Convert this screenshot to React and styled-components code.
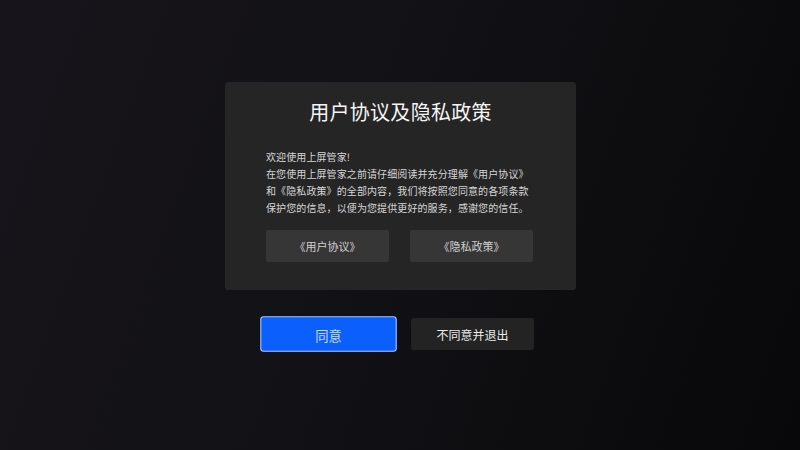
import React from 'react';
import styled, { createGlobalStyle } from 'styled-components';

const GlobalStyle = createGlobalStyle`
  html, body {
    margin: 0;
    padding: 0;
    background: #0c0b0e;
  }
  * {
    box-sizing: border-box;
  }
`;

const Page = styled.div`
  width: 800px;
  height: 450px;
  overflow: hidden;
  display: flex;
  flex-direction: column;
  align-items: center;
  padding-top: 82px;
  background: linear-gradient(110deg, #17151b 0%, #121115 45%, #08080a 100%);
  font-family: "Noto Sans CJK SC", "Noto Sans", sans-serif;
`;

const Card = styled.div`
  width: 351px;
  height: 208px;
  margin-left: 1px;
  padding: 15px 41px 0 41px;
  background: #252525;
  border-radius: 3px;
  display: flex;
  flex-direction: column;
`;

const Title = styled.h1`
  margin: 0;
  font-size: 20px;
  line-height: 30px;
  font-weight: 400;
  color: #f4f4f4;
  text-align: center;
  letter-spacing: 0.3px;
`;

const Body = styled.div`
  margin-top: 21px;
  font-size: 10px;
  line-height: 17px;
  color: #d6d6d6;
  letter-spacing: 0.1px;
`;

const Line = styled.p`
  margin: 0;
  white-space: nowrap;
`;

const LinkRow = styled.div`
  margin-top: 14px;
  display: flex;
  gap: 21px;
`;

const LinkButton = styled.button`
  width: 123px;
  height: 32px;
  border: none;
  border-radius: 2px;
  background: #363636;
  color: #cfcfcf;
  font-family: inherit;
  font-size: 11px;
  padding: 0;
`;

const ActionRow = styled.div`
  margin-top: 28px;
  margin-left: 1px;
  display: flex;
  gap: 21px;
`;

const ActionButton = styled.button`
  width: 123px;
  height: 32px;
  padding: 0;
  border-radius: 3px;
  font-family: inherit;
  font-size: 12px;
  border: ${(p) => (p.$focused ? '1px solid #a9c4ff' : 'none')};
  background: ${(p) => (p.$focused ? '#0b5ffd' : '#232323')};
  color: ${(p) => (p.$focused ? '#c9d9ff' : '#ececec')};
  transform: ${(p) => (p.$focused ? 'scale(1.11)' : 'none')};
`;

const App = () => {
  return (
    <>
      <GlobalStyle />
      <Page>
        <Card>
          <Title>用户协议及隐私政策</Title>
          <Body>
            <Line>欢迎使用上屏管家!</Line>
            <Line>在您使用上屏管家之前请仔细阅读并充分理解《用户协议》</Line>
            <Line>和《隐私政策》的全部内容，我们将按照您同意的各项条款</Line>
            <Line>保护您的信息，以便为您提供更好的服务，感谢您的信任。</Line>
          </Body>
          <LinkRow>
            <LinkButton>《用户协议》</LinkButton>
            <LinkButton>《隐私政策》</LinkButton>
          </LinkRow>
        </Card>
        <ActionRow>
          <ActionButton $focused>同意</ActionButton>
          <ActionButton>不同意并退出</ActionButton>
        </ActionRow>
      </Page>
    </>
  );
};

export default App;
